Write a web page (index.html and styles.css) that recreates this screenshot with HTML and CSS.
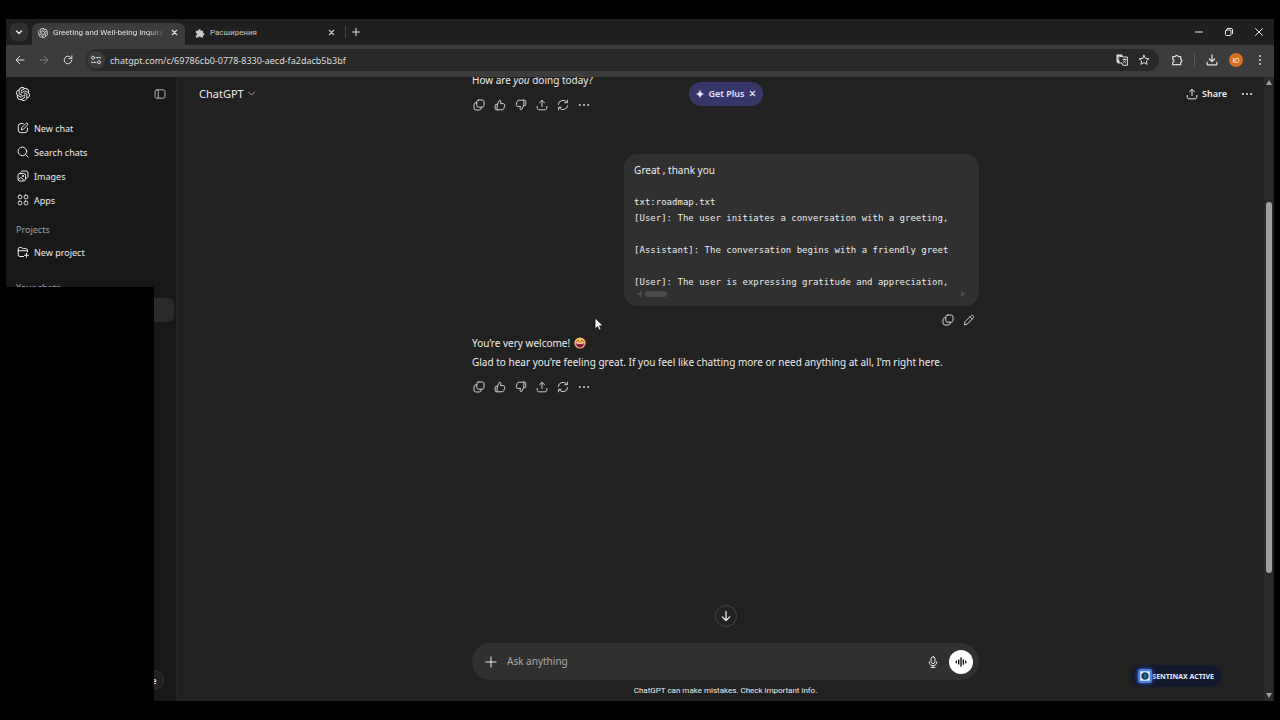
FILE: index.html
```html
<!DOCTYPE html>
<html lang="en">
<head>
<meta charset="UTF-8">
<meta name="viewport" content="width=device-width,initial-scale=1.0">
<title>Greeting and Well-being Inquiry</title>
<link rel="stylesheet" href="styles.css">
</head>
<body>

<!-- shared icons -->
<svg class="defs" aria-hidden="true">
  <symbol id="logo" viewBox="0 0 24 24"><path fill="currentColor" stroke="none" d="M22.2819 9.8211a5.9847 5.9847 0 0 0-.5157-4.9108 6.0462 6.0462 0 0 0-6.5098-2.9A6.0651 6.0651 0 0 0 4.9807 4.1818a5.9847 5.9847 0 0 0-3.9977 2.9 6.0462 6.0462 0 0 0 .7427 7.0966 5.98 5.98 0 0 0 .511 4.9107 6.051 6.051 0 0 0 6.5146 2.9001A5.9847 5.9847 0 0 0 13.2599 24a6.0557 6.0557 0 0 0 5.7718-4.2058 5.9894 5.9894 0 0 0 3.9977-2.9001 6.0557 6.0557 0 0 0-.7475-7.0729zm-9.022 12.6081a4.4755 4.4755 0 0 1-2.8764-1.0408l.1419-.0804 4.7783-2.7582a.7948.7948 0 0 0 .3927-.6813v-6.7369l2.02 1.1686a.071.071 0 0 1 .038.052v5.5826a4.504 4.504 0 0 1-4.4945 4.4944zm-9.6607-4.1254a4.4708 4.4708 0 0 1-.5346-3.0137l.142.0852 4.783 2.7582a.7712.7712 0 0 0 .7806 0l5.8428-3.3685v2.3324a.0804.0804 0 0 1-.0332.0615L9.74 19.9502a4.4992 4.4992 0 0 1-6.1408-1.6464zM2.3408 7.8956a4.485 4.485 0 0 1 2.3655-1.9728V11.6a.7664.7664 0 0 0 .3879.6765l5.8144 3.3543-2.0201 1.1685a.0757.0757 0 0 1-.071 0l-4.8303-2.7865A4.504 4.504 0 0 1 2.3408 7.872zm16.5963 3.8558L13.1038 8.364 15.1192 7.2a.0757.0757 0 0 1 .071 0l4.8303 2.7913a4.4944 4.4944 0 0 1-.6765 8.1042v-5.6772a.79.79 0 0 0-.407-.667zm2.0107-3.0231l-.142-.0852-4.7735-2.7818a.7759.7759 0 0 0-.7854 0L9.409 9.2297V6.8974a.0662.0662 0 0 1 .0284-.0615l4.8303-2.7866a4.4992 4.4992 0 0 1 6.6802 4.66zM8.3065 12.863l-2.02-1.1638a.0804.0804 0 0 1-.038-.0567V6.0742a4.4992 4.4992 0 0 1 7.3757-3.4537l-.142.0805L8.704 5.459a.7948.7948 0 0 0-.3927.6813zm1.0976-2.3654l2.602-1.4998 2.6069 1.4998v2.9994l-2.5974 1.4997-2.6067-1.4997Z"/></symbol>
  <symbol id="copy" viewBox="0 0 12 12"><rect x="3.8" y="1" width="7.2" height="7.2" rx="1.8"/><path d="M3.8 3.8H2.9A1.9 1.9 0 0 0 1 5.7v3.4A1.9 1.9 0 0 0 2.9 11h3.4a1.9 1.9 0 0 0 1.9-1.9v-.9"/></symbol>
  <symbol id="up" viewBox="0 0 12 12"><path d="M3.4 5.3 5.5 1.2c1 0 1.6.7 1.4 1.6l-.4 1.8h2.7c1.1 0 1.8.9 1.5 1.9l-.9 3.1c-.2.8-.8 1.2-1.6 1.2H3.4zM3.4 5.3H2.2c-.6 0-1 .4-1 1v3.5c0 .6.4 1 1 1h1.2"/></symbol>
  <symbol id="share" viewBox="0 0 12 12"><path d="M6 7.6V1.4M3.5 3.8 6 1.3l2.5 2.5M1.2 7.4v1.7c0 1 .7 1.7 1.7 1.7h6.2c1 0 1.7-.7 1.7-1.7V7.4"/></symbol>
  <symbol id="retry" viewBox="0 0 12 12"><path d="M1.3 5.4A4.7 4.7 0 0 1 9.8 3.3M10.4 1.1v2.6H7.8M10.7 6.6a4.7 4.7 0 0 1-8.5 2.1M1.6 10.9V8.3h2.6"/></symbol>
  <symbol id="dots" viewBox="0 0 12 12"><g fill="currentColor" stroke="none"><circle cx="1.9" cy="6" r="1"/><circle cx="6" cy="6" r="1"/><circle cx="10.1" cy="6" r="1"/></g></symbol>
  <symbol id="close" viewBox="0 0 12 12"><path stroke-width="1.5" d="m3 3 6 6M9 3 3 9"/></symbol>
</svg>

<div class="window">
  <div class="tabs">
    <button class="tab-search" aria-label="Search tabs"><svg viewBox="0 0 12 12"><path stroke-width="1.4" d="M3.5 5 6 7.4 8.5 5"/></svg></button>
    <div class="tab active">
      <svg><use href="#logo"/></svg>
      <span class="tab-title">Greeting and Well-being Inquiry</span>
      <button aria-label="Close tab"><svg class="small"><use href="#close"/></svg></button>
    </div>
    <div class="tab">
      <svg viewBox="0 0 12 12"><path fill="currentColor" stroke="none" d="M1 3.2h2.8a1.6 1.6 0 1 1 3.2 0h2.7V6a1.5 1.5 0 1 1 0 3v2.5H7a1.4 1.4 0 0 0-2.8 0H1V8.8A1.4 1.4 0 0 0 1 6z"/></svg>
      <span class="tab-title">Расширения</span>
      <button aria-label="Close tab"><svg class="small"><use href="#close"/></svg></button>
    </div>
    <button class="new-tab" aria-label="New tab"><svg viewBox="0 0 12 12"><path d="M6 2.5v7M2.5 6h7"/></svg></button>
    <div class="window-controls">
      <button aria-label="Minimize"><svg viewBox="0 0 12 12"><path d="M2.5 6h7"/></svg></button>
      <button aria-label="Restore"><svg viewBox="0 0 12 12"><rect x="2.5" y="4" width="5.5" height="5.5" rx="1"/><path d="M4.4 2.5h3.8c.8 0 1.3.5 1.3 1.3v3.8"/></svg></button>
      <button aria-label="Close"><svg viewBox="0 0 12 12"><path d="m2.5 2.5 7 7M9.5 2.5l-7 7"/></svg></button>
    </div>
  </div>

  <div class="toolbar">
    <button aria-label="Back"><svg viewBox="0 0 12 12"><path d="M10 6H2.3M5.7 2.3 2 6l3.700 3.700"/></svg></button>
    <button class="off" aria-label="Forward" disabled><svg viewBox="0 0 12 12"><path d="M2 6h7.700M6.300 2.300 10 6 6.300 9.700"/></svg></button>
    <button aria-label="Reload"><svg viewBox="0 0 12 12"><path d="M9.800 6.300A3.800 3.800 0 1 1 8.800 3.400L9.800 4.500M9.900 1.700v2.900H7"/></svg></button>
    <div class="address">
      <button class="site-info" aria-label="Site information"><svg viewBox="0 0 12 12"><circle cx="3" cy="3.700" r="1.500"/><path d="M6 3.700h4.500M1.500 8.300H6"/><circle cx="9" cy="8.300" r="1.500"/></svg></button>
      <input type="text" aria-label="Address" value="chatgpt.com/c/69786cb0-0778-8330-aecd-fa2dacb5b3bf">
      <button aria-label="Translate"><svg viewBox="0 0 12 12"><path fill="currentColor" stroke="none" d="M.5.5h5.700L7 3H3.500v6H2A1.500 1.500 0 0 1 .5 7.500z"/><path d="M7 3h4.400v8.300H6.800L6 9H2.500"/><path stroke="#282828" d="M4.800 3.500a1.400 1.400 0 1 0 .2 1.700H4"/><path stroke-width=".8" d="M6.800 5.500h3.400M8.500 4.800v.7M9.700 5.500c-.3 1.300-1.200 2.300-2.300 3M7.600 6.800l2 2"/></svg></button>
      <button aria-label="Bookmark"><svg viewBox="0 0 12 12"><path d="m6 1.200 1.400 3.200 3.500.3-2.600 2.300.8 3.400L6 8.600l-3.100 1.800.8-3.400-2.600-2.300 3.500-.3z"/></svg></button>
    </div>
    <button aria-label="Extensions"><svg viewBox="0 0 12 12"><path stroke-width="1.200" d="M1.700 2.600h2.600c0-1.700 2.800-1.700 2.800 0h2.600v2.700c1.600 0 1.600 2.700 0 2.700v2.700h-8V8.200c1.700 0 1.700-2.900 0-2.900z"/></svg></button>
    <span class="divider"></span>
    <button aria-label="Downloads"><svg viewBox="0 0 12 12"><path stroke-width="1.300" d="M6 1v6.500M3.400 5 6 7.600 8.600 5M1.200 8.500v2.300h9.600V8.500"/></svg></button>
    <button class="profile" aria-label="Profile">Ю</button>
    <button aria-label="Menu"><svg viewBox="0 0 12 12"><g fill="currentColor" stroke="none"><circle cx="6" cy="2" r="1"/><circle cx="6" cy="6" r="1"/><circle cx="6" cy="10" r="1"/></g></svg></button>
  </div>

  <div class="page">
    <nav class="sidebar">
      <div class="sidebar-top">
        <a href="#" aria-label="Home"><svg class="logo"><use href="#logo"/></svg></a>
        <button aria-label="Close sidebar"><svg viewBox="0 0 12 12"><rect x="1" y="1.800" width="10" height="8.400" rx="1.800"/><path d="M4.200 1.800v8.400"/></svg></button>
      </div>
      <a class="item" href="#"><svg viewBox="0 0 12 12"><path d="M6 1.500H4A2.700 2.700 0 0 0 1.300 4.200V8A2.700 2.700 0 0 0 4 10.700h3.800A2.700 2.700 0 0 0 10.500 8V6M4.500 7.500l.3-1.900 4.300-4.300c1-.8 2.400.5 1.600 1.600L6.400 7.200z"/></svg>New chat</a>
      <a class="item" href="#"><svg viewBox="0 0 12 12"><circle cx="5.400" cy="5.400" r="4.300"/><path d="m8.500 8.500 2.700 2.700"/></svg>Search chats</a>
      <a class="item" href="#"><svg viewBox="0 0 12 12"><rect x="1" y="3.500" width="7.500" height="7.500" rx="1.800"/><path d="M3.500 3.500C3.500 2 4.200 1 5.500 1H9a2 2 0 0 1 2 2v3.500c0 1.200-1 2-2.500 2M1.500 9.500l1.700-1.600c.5-.4 1-.4 1.500 0l2.500 2.700"/><circle cx="5.800" cy="6" r=".7"/></svg>Images</a>
      <a class="item" href="#"><svg viewBox="0 0 12 12"><rect x="1.200" y="1.200" width="3.600" height="3.600" rx="1.300"/><rect x="7.200" y="1.200" width="3.600" height="3.600" rx="1.300"/><rect x="1.200" y="7.200" width="3.600" height="3.600" rx="1.300"/><rect x="7.200" y="7.200" width="3.600" height="3.600" rx="1.300"/></svg>Apps</a>
      <h2>Projects</h2>
      <a class="item" href="#"><svg viewBox="0 0 12 12"><path d="M6.500 10.500H3a1.800 1.800 0 0 1-1.800-1.800V2.900c0-.9.600-1.400 1.400-1.400h1.500c1 0 1.200 1.100 2.200 1.100h2.500c1 0 1.700.7 1.700 1.700v1.500M1.200 4.700h9.300M9.500 7.300v4M7.500 9.300h4"/></svg>New project</a>
      <h2>Your chats</h2>
      <a class="item current" href="#" aria-label="Current chat"></a>
      <button class="plan">e</button>
    </nav>

    <main>
      <header>
        <button class="model">ChatGPT <svg viewBox="0 0 12 12"><path stroke-width="1.300" d="M2 4 6 8l4-4"/></svg></button>
        <button class="plus"><svg viewBox="0 0 12 12"><path fill="currentColor" stroke="none" d="M6 .5C6.700 4 8 5.300 11.500 6 8 6.700 6.700 8 6 11.500 5.300 8 4 6.700.5 6 4 5.300 5.300 4 6 .5z"/></svg>Get Plus<svg class="small"><use href="#close"/></svg></button>
        <div class="header-end">
          <button class="share"><svg><use href="#share"/></svg>Share</button>
          <button aria-label="More"><svg><use href="#dots"/></svg></button>
        </div>
      </header>

      <div class="thread">
        <div class="reply">
          <p>How are <em>you</em> doing today?</p>
          <div class="actions">
            <button aria-label="Copy"><svg><use href="#copy"/></svg></button>
            <button aria-label="Good response"><svg><use href="#up"/></svg></button>
            <button aria-label="Bad response"><svg class="down"><use href="#up"/></svg></button>
            <button aria-label="Share"><svg><use href="#share"/></svg></button>
            <button aria-label="Try again"><svg><use href="#retry"/></svg></button>
            <button aria-label="More"><svg><use href="#dots"/></svg></button>
          </div>
        </div>

        <div class="prompt">
          <p>Great , thank you</p>
          <pre>txt:roadmap.txt
[User]: The user initiates a conversation with a greeting,

[Assistant]: The conversation begins with a friendly greet

[User]: The user is expressing gratitude and appreciation,</pre>
          <div class="hscroll"><span class="left"></span><span class="hthumb"></span><span class="right"></span></div>
        </div>
        <div class="actions end">
          <button aria-label="Copy"><svg><use href="#copy"/></svg></button>
          <button aria-label="Edit"><svg viewBox="0 0 12 12"><path d="m1.500 10.500.6-2.900L8 1.700c1.400-1.300 3.600.9 2.300 2.300L4.400 9.900zM7 2.700 9.300 5"/></svg></button>
        </div>

        <div class="reply">
          <p>You’re very welcome! <svg class="emoji" viewBox="0 0 12 12" role="img" aria-label="grinning face"><circle cx="6" cy="6" r="5.600" fill="#f8bd62"/><path fill="#f08a78" d="M.6 6.500h10.800a5.600 5.600 0 0 1-10.800 0z"/><path fill="#7a1440" d="M2.300 6.200h7.400C9.700 8.800 8.200 10.400 6 10.400S2.300 8.800 2.300 6.200z"/><path fill="#f3d9dc" d="M3 6.200h6v.9H3z"/><path stroke="#7a3424" stroke-width=".9" d="m2.700 4.500 1.200-1.200 1.200 1.200M6.900 4.500l1.200-1.200 1.200 1.200"/></svg></p>
          <p>Glad to hear you’re feeling great. If you feel like chatting more or need anything at all, I’m right here.</p>
          <div class="actions">
            <button aria-label="Copy"><svg><use href="#copy"/></svg></button>
            <button aria-label="Good response"><svg><use href="#up"/></svg></button>
            <button aria-label="Bad response"><svg class="down"><use href="#up"/></svg></button>
            <button aria-label="Share"><svg><use href="#share"/></svg></button>
            <button aria-label="Try again"><svg><use href="#retry"/></svg></button>
            <button aria-label="More"><svg><use href="#dots"/></svg></button>
          </div>
        </div>
      </div>

      <form class="composer">
        <button type="button" class="to-bottom" aria-label="Scroll to bottom"><svg viewBox="0 0 12 12"><path stroke-width="1.300" d="M6 1.500v9M2.300 6.900 6 10.500l3.700-3.600"/></svg></button>
        <button type="button" aria-label="Add files"><svg viewBox="0 0 12 12"><path d="M6 1v10M1 6h10"/></svg></button>
        <input type="text" aria-label="Message" placeholder="Ask anything">
        <button type="button" aria-label="Dictate"><svg viewBox="0 0 12 12"><rect x="4" y=".8" width="4" height="6.700" rx="2"/><path d="M2.200 5.800a3.800 3.800 0 0 0 7.600 0M6 9.600v1.800M4 11.400h4"/></svg></button>
        <button type="button" class="voice" aria-label="Voice mode"><svg viewBox="0 0 12 12"><path stroke-width="1.300" d="M1.300 5.200v1.600M3.700 4v4M6 1.800v8.400M8.300 3.800v4.400M10.700 5.200v1.600"/></svg></button>
      </form>
      <p class="note">ChatGPT can make mistakes. Check important info.</p>

      <div class="scrollbar"><span class="arrow-up"></span><span class="thumb"></span><span class="arrow-down"></span></div>
      <div class="sentinax"><svg viewBox="0 0 12 12"><rect width="12" height="12" rx="2" fill="#4c7fe0" stroke="none"/><rect x="2" y="2" width="8" height="8" fill="#fff" stroke="none"/><circle cx="6" cy="6" r="3.200" fill="#12476b" stroke="none"/><path stroke="#5f88a8" stroke-width=".8" d="M6 5v2"/></svg>SENTINAX ACTIVE</div>
      <svg class="cursor" viewBox="0 0 9 12"><path fill="#fff" stroke="#111" stroke-width=".6" d="M1 .8v9.400l2.300-2 1.400 3.200 1.600-.7-1.400-3.100h3z"/></svg>
    </main>
  </div>
</div>
<div class="cover"></div>

</body>
</html>
```
FILE: styles.css
```css
* { box-sizing:border-box; }
body { margin:0; height:100vh; padding:19px 6px; display:flex; background:#000; color:#ececec; font:10px/19px "Noto Sans",sans-serif; overflow:hidden; position:relative; }
button, input { font:inherit; color:inherit; background:none; border:0; padding:0; margin:0; }
button { display:flex; align-items:center; justify-content:center; cursor:pointer; }
input { min-width:0; outline:0; }
a { color:inherit; text-decoration:none; }
p, h2, pre { margin:0; }
svg { width:12px; height:12px; flex:none; fill:none; stroke:currentColor; stroke-width:1; stroke-linecap:round; stroke-linejoin:round; }
.defs { position:absolute; width:0; height:0; }

.window { flex:1; min-width:0; display:flex; flex-direction:column; background:#212121; }

/* browser */
.tabs { height:26px; display:flex; align-items:center; background:#1f1f1f; padding:0 0 0 4px; }
.tab-search { width:18px; height:18px; border-radius:6px; background:#303030; margin-right:4px; }
.tab { width:158px; height:22px; display:flex; align-items:center; gap:5px; padding:0 7px 3px 10px; color:#c7c7c7; align-self:flex-end; font:8px/19px Roboto,sans-serif; }
.tab.active { width:153px; background:#3c3c3c; border-radius:7px 7px 0 0; color:#e4e4e4; padding:0 6px 3px 6px; }
.tab > svg { width:10px; height:10px; }
svg.small { width:9px; height:9px; }
.tab-title { flex:1; overflow:hidden; white-space:nowrap; }
.active .tab-title { -webkit-mask-image:linear-gradient(90deg,#000 85%,transparent); mask-image:linear-gradient(90deg,#000 85%,transparent); }
.new-tab { border-left:1px solid #444; padding-left:4px; margin-left:2px; }
.window-controls { margin-left:auto; display:flex; gap:18px; padding-right:9px; }
.toolbar { height:32px; display:flex; align-items:center; gap:12px; background:#3c3c3c; padding:0 8px 2px 8px; color:#dcdcdc; }
.toolbar .off { color:#7c7c7c; }
.address { flex:1; height:22px; border-radius:11px; background:#282828; display:flex; align-items:center; gap:10px; padding:0 9px 0 1px; }
.address input { flex:1; margin-left:-5px; font-size:9px; }
.site-info { width:18px; height:18px; border-radius:50%; background:#3c3c3c; }
.divider { width:1px; height:12px; margin:0 -1px; background:#5c5c5c; }
.profile { width:14px; height:14px; border-radius:50%; background:#d96f1e; color:#fff; font-size:7px; margin:0 -1px; }

/* sidebar */
.page { flex:1; min-height:0; display:flex; }
.sidebar { width:171px; background:#181818; border-right:1px solid #262626; padding-right:2px; font-size:9px; display:flex; flex-direction:column; }
.sidebar-top { height:34px; display:flex; align-items:center; justify-content:space-between; padding:0 8px 0 10px; margin-bottom:5px; color:#b4b4b4; }
.sidebar-top a { display:flex; color:#ececec; }
.logo { width:14px; height:14px; }
.item { height:24px; display:flex; align-items:center; gap:5px; padding-left:11px; }
.sidebar h2 { margin-top:8px; padding-left:10px; font-size:9px; line-height:20px; font-weight:400; color:#a0a0a0; }
.item + h2 ~ h2 { margin-top:14px; }
.current { background:#2a2a2a; border-radius:6px; }
.plan { margin:auto 10px 11px auto; width:22px; height:20px; padding-left:2px; border:1px solid #353530; border-radius:10px; background:#212121; font-size:8px; font-weight:600; }

/* chat */
main { flex:1; min-width:0; position:relative; display:flex; flex-direction:column; align-items:center; }
header { position:absolute; inset:0 0 auto 0; height:33px; padding:0 21px 0 22px; display:grid; grid-template-columns:1fr auto 1fr; align-items:center; }
.model { justify-self:start; font-size:11px; gap:3px; }
.model svg { width:9px; height:9px; color:#a0a0a0; }
.plus { height:24px; border-radius:12px; padding:0 6px; gap:3px; background:#373669; color:#e4e3ff; font-size:9px; font-weight:600; }
.plus svg { width:10px; height:10px; }
.plus svg.small { width:9px; height:9px; }
.header-end { justify-self:end; display:flex; gap:14px; }
.share { gap:4px; font-size:9px; font-weight:600; }
.thread, .composer, .note { width:calc(100% - 40px); max-width:507px; }
.thread { flex:1; min-height:0; overflow:hidden; display:flex; flex-direction:column; }
.reply p { margin-top:-6px; }
.reply p + p { margin-top:0; }
.actions { display:flex; gap:9px; padding:9px 1px 8px; color:#d0d0d0; }
.end { justify-content:flex-end; padding:8px 4px 14px; }
.down { transform:rotate(180deg); }
.prompt { align-self:flex-end; width:70%; margin-top:35px; padding:8px 10px; border-radius:14px; background:#303030; line-height:16px; }
.prompt pre { margin-top:16px; font:9px/16px "DejaVu Sans Mono",monospace; overflow:hidden; }
.hscroll { display:flex; align-items:center; height:8px; padding:0 3px; }
.left, .right { border:3px solid transparent; border-right:5px solid #4c4c4c; border-left:0; }
.right { border-left:5px solid #4c4c4c; border-right:0; margin-left:auto; }
.hthumb { width:22px; height:6px; border-radius:3px; background:#4c4c4c; margin-left:3px; }
.emoji { vertical-align:-2px; margin-left:1px; stroke:none; }
.composer { position:relative; height:37px; border-radius:19px; background:#303030; display:flex; align-items:center; gap:10px; padding:0 6px 0 13px; }
.composer input { flex:1; }
.composer input::placeholder { color:#a8a8a8; opacity:1; }
.voice { width:24px; height:24px; border-radius:50%; background:#fff; color:#000; }
.to-bottom { position:absolute; left:50%; top:-38px; margin-left:-11px; width:22px; height:22px; border:1px solid #444; border-radius:50%; background:#212121; }
.note { text-align:center; font:8px/21px Roboto,sans-serif; }

/* things over the chat */
.scrollbar { position:absolute; inset:0 1px 0 auto; width:9px; background:#2b2b2b; display:flex; flex-direction:column; align-items:center; padding:3px 0; }
.thumb { width:6px; height:60%; margin:117px 0 auto; border-radius:3px; background:#9f9f9f; }
.arrow-up, .arrow-down { border:3px solid transparent; border-bottom:5px solid #a0a0a0; border-top:0; }
.arrow-down { border-top:5px solid #a0a0a0; border-bottom:0; }
.sentinax { position:absolute; right:53px; bottom:14px; height:22px; padding:0 7px; border-radius:11px; background:#141a2e; color:#e4ecff; display:flex; align-items:center; font-size:7px; font-weight:700; }
.sentinax svg { width:14px; height:14px; filter:drop-shadow(0 0 2px #2f6df0); }
.cursor { position:absolute; left:417px; top:240px; width:10px; height:14px; }
.cover { position:absolute; left:0; top:287px; bottom:0; width:154px; background:#000; }
```
